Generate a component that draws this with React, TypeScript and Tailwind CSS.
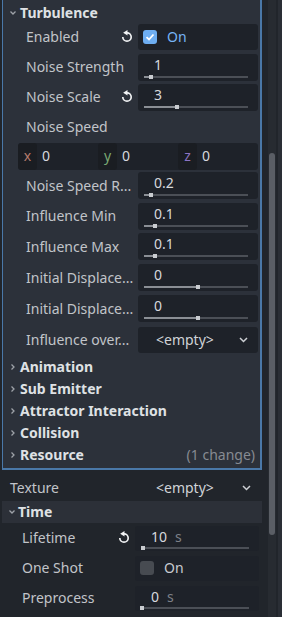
import React from 'react';

type Slider = { value: string; unit?: string; pos: number; len: number };

function ChevronDown({ className = '' }: { className?: string }) {
  return (
    <svg width="8" height="8" viewBox="0 0 8 8" className={className}>
      <path d="M1.5 2.5 L4 5 L6.5 2.5" fill="none" stroke="#9ea2a8" strokeWidth="1.3" />
    </svg>
  );
}

function ChevronRight() {
  return (
    <svg width="8" height="8" viewBox="0 0 8 8">
      <path d="M2.5 1.5 L5 4 L2.5 6.5" fill="none" stroke="#9ea2a8" strokeWidth="1.3" />
    </svg>
  );
}

function RevertIcon() {
  return (
    <svg width="14" height="14" viewBox="0 0 16 16">
      <path d="M8 3.2 A4.8 4.8 0 1 1 3.2 8" fill="none" stroke="#f2f3f5" strokeWidth="1.9" />
      <path d="M3.6 3.2 L8.6 0 L8.6 6.4 Z" fill="#f2f3f5" />
    </svg>
  );
}

function DropChevron() {
  return (
    <svg width="9" height="6" viewBox="0 0 9 6">
      <path d="M1 1 L4.5 4.5 L8 1" fill="none" stroke="#cdd0d4" strokeWidth="1.5" />
    </svg>
  );
}

function SliderField({ s, wide }: { s: Slider; wide?: boolean }) {
  return (
    <div className={`${wide ? 'w-[124px] h-[25px]' : 'w-[120px] h-[27px]'} bg-[#1e2229] rounded-[3px] flex flex-col`}>
      <div className="pl-[16px] pt-[1px] h-[21px] leading-[20px] text-[#d6d9dd] flex gap-[8px]">
        <span>{s.value}</span>
        {s.unit && <span className="text-[#7d8188]">{s.unit}</span>}
      </div>
      <div className={`ml-[6px] mr-[10px] ${wide ? 'mt-0' : 'mt-[1px]'} h-[2px] bg-[#4b4f56] relative`}>
        <div className="h-[2px] bg-[#8b8f95]" style={{ width: s.pos }} />
        <div className="absolute top-[-1px] w-[4px] h-[4px] bg-[#c9ccd0]" style={{ left: s.pos - 2 }} />
      </div>
    </div>
  );
}

function PropRow({
  label,
  revert,
  children,
  h = 30,
  indent = 23,
}: {
  label: string;
  revert?: boolean;
  children?: React.ReactNode;
  h?: number;
  indent?: number;
}) {
  return (
    <div className="flex items-center" style={{ height: h }}>
      <div className="w-[135px] flex items-center justify-between pr-[4px]" style={{ paddingLeft: indent }}>
        <span className="text-[#c1c4c9] whitespace-nowrap">{label}</span>
        {revert && <RevertIcon />}
      </div>
      {children}
    </div>
  );
}

function SectionHeader({ title, note }: { title: string; note?: string }) {
  return (
    <div className="h-[22px] flex items-center pl-[6px] pr-[5px]">
      <ChevronRight />
      <span className="ml-[3px] font-bold text-[#dfe1e4]">{title}</span>
      {note && <span className="ml-auto text-[#878b92]">{note}</span>}
    </div>
  );
}

function Vec3() {
  const axes = [
    { k: 'x', c: 'text-[#b47a6c]' },
    { k: 'y', c: 'text-[#79a872]' },
    { k: 'z', c: 'text-[#8c74c2]' },
  ];
  return (
    <div className="ml-[15px] w-[240px] h-[27px] flex rounded-[3px] overflow-hidden bg-[#1e2229]">
      {axes.map((a) => (
        <div key={a.k} className="flex-1 flex items-center">
          <div className={`w-[19px] h-full bg-[#1a1d22] rounded-[3px] flex items-center justify-center ${a.c}`}>
            {a.k}
          </div>
          <span className="ml-[5px] text-[#d6d9dd]">0</span>
        </div>
      ))}
    </div>
  );
}

export default function App() {
  return (
    <div className="w-[282px] h-[617px] bg-[#21252b] flex overflow-hidden font-['Noto_Sans'] text-[14px] leading-none">
      <div className="w-[262px] flex flex-col">
        {/* Turbulence subsection */}
        <div className="ml-[2px] w-[260px] bg-[#2c313a] border-l border-r-2 border-b-2 border-[#4a78a8] pt-[3px] pb-[2px] flex flex-col">
          <div className="h-[19px] flex items-center pl-[6px]">
            <ChevronDown />
            <span className="ml-[3px] font-bold text-[#dfe1e4]">Turbulence</span>
          </div>

          <PropRow label="Enabled" revert>
            <div className="w-[120px] h-[26px] bg-[#1e2229] rounded-[3px] flex items-center pl-[5px]">
              <div className="w-[14px] h-[14px] rounded-[3px] bg-[#6eaef2] flex items-center justify-center">
                <svg width="10" height="10" viewBox="0 0 10 10">
                  <path d="M1.5 5.2 L4 7.5 L8.5 2.5" fill="none" stroke="#ffffff" strokeWidth="1.8" />
                </svg>
              </div>
              <span className="ml-[10px] text-[#76b4f5]">On</span>
            </div>
          </PropRow>
          <PropRow label="Noise Strength">
            <SliderField s={{ value: '1', pos: 7, len: 104 }} />
          </PropRow>
          <PropRow label="Noise Scale" revert>
            <SliderField s={{ value: '3', pos: 33, len: 104 }} />
          </PropRow>
          <PropRow label="Noise Speed" />
          <div className="h-[28px] flex items-center">
            <Vec3 />
          </div>
          <PropRow label="Noise Speed R..." h={31}>
            <SliderField s={{ value: '0.2', pos: 7, len: 104 }} />
          </PropRow>
          <PropRow label="Influence Min">
            <SliderField s={{ value: '0.1', pos: 11, len: 104 }} />
          </PropRow>
          <PropRow label="Influence Max" h={31}>
            <SliderField s={{ value: '0.1', pos: 11, len: 104 }} />
          </PropRow>
          <PropRow label="Initial Displace..." h={31}>
            <SliderField s={{ value: '0', pos: 54, len: 104 }} />
          </PropRow>
          <PropRow label="Initial Displace..." h={31}>
            <SliderField s={{ value: '0', pos: 54, len: 104 }} />
          </PropRow>
          <PropRow label="Influence over..." h={31}>
            <div className="w-[120px] h-[26px] bg-[#1e2229] rounded-[3px] flex items-center pl-[18px] pr-[10px] justify-between">
              <span className="text-[#d0d3d7]">&lt;empty&gt;</span>
              <DropChevron />
            </div>
          </PropRow>

          <div className="mt-[1px]">
            <SectionHeader title="Animation" />
            <SectionHeader title="Sub Emitter" />
            <SectionHeader title="Attractor Interaction" />
            <SectionHeader title="Collision" />
            <SectionHeader title="Resource" note="(1 change)" />
          </div>
        </div>

        {/* Texture */}
        <div className="mt-[5px] h-[26px] flex items-center">
          <div className="w-[138px] pl-[10px] text-[#c1c4c9]">Texture</div>
          <div className="w-[124px] flex items-center pl-[18px] pr-[11px] justify-between">
            <span className="text-[#d0d3d7]">&lt;empty&gt;</span>
            <DropChevron />
          </div>
        </div>

        {/* Time section */}
        <div className="ml-[2px] w-[260px] h-[22px] bg-[#2c3038] flex items-center pl-[6px]">
          <ChevronDown />
          <span className="ml-[2px] font-bold text-[#dfe1e4]">Time</span>
        </div>
        <div className="flex flex-col">
          <PropRow label="Lifetime" revert indent={22} h={30}>
            <SliderField wide s={{ value: '10', unit: 's', pos: 2, len: 108 }} />
          </PropRow>
          <PropRow label="One Shot" indent={22} h={30}>
            <div className="w-[124px] h-[25px] bg-[#1e2229] rounded-[3px] flex items-center pl-[5px]">
              <div className="w-[14px] h-[14px] rounded-[3px] bg-[#474b51]" />
              <span className="ml-[10px] text-[#c8cbd0]">On</span>
            </div>
          </PropRow>
          <PropRow label="Preprocess" indent={22} h={30}>
            <SliderField wide s={{ value: '0', unit: 's', pos: 1, len: 108 }} />
          </PropRow>
        </div>
      </div>

      {/* scrollbar */}
      <div className="w-[20px] flex">
        <div className="ml-[6px] w-[8px] h-full bg-[#272b31] flex flex-col">
          <div className="mt-[153px] mx-[1px] h-[382px] rounded-[3px] bg-[#5a5e65]" />
        </div>
        <div className="ml-[2px] w-[4px] h-full bg-[#2a2e35]" />
      </div>
    </div>
  );
}
